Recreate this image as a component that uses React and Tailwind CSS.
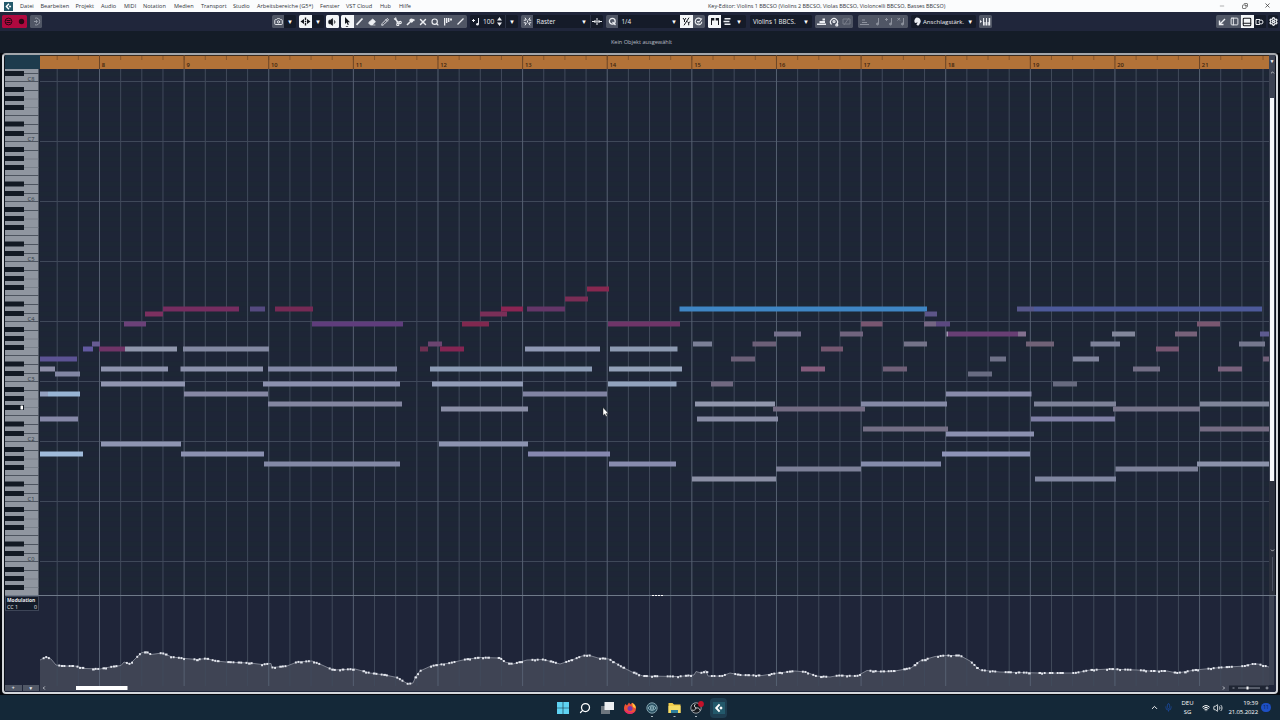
import {
  Camera, ChevronDown, ChevronUp, Copy, Eraser, Mic, Minus, PanelBottom, PanelLeft,
  Pencil, Search, Settings, Volume1, Volume2, Wifi, X,
} from "lucide-react";

const menus = [
  { name: "Datei", w: "w-[20.5px]" },
  { name: "Bearbeiten", w: "w-[35px]" },
  { name: "Projekt", w: "w-[25.5px]" },
  { name: "Audio", w: "w-[23px]" },
  { name: "MIDI", w: "w-[19px]" },
  { name: "Notation", w: "w-[31px]" },
  { name: "Medien", w: "w-[27px]" },
  { name: "Transport", w: "w-[32px]" },
  { name: "Studio", w: "w-[24px]" },
  { name: "Arbeitsbereiche (G5*)", w: "w-[63px]" },
  { name: "Fenster", w: "w-[26px]" },
  { name: "VST Cloud", w: "w-[34px]" },
  { name: "Hub", w: "w-[19px]" },
  { name: "Hilfe", w: "w-[20px]" },
];

const BAR = 84.62;
const bars = Array.from({ length: 14 }, (_, i) => ({ n: i + 8, x: 99.5 + i * BAR }));
const beats = Array.from({ length: 58 }, (_, i) => ({ i, x: 57.2 + i * (BAR / 4) }));
const octaves = [8, 7, 6, 5, 4, 3, 2, 1, 0].map((n, i) => ({ n, y: 81.5 + i * 60 }));

// [start, end, centre y, colour]
const notes = [
  [40, 77, 359, "#5c5394"], [40, 55, 369, "#8d8ea8"], [55, 80, 374, "#8286a4"],
  [40, 48, 394, "#93a0be"], [48, 80, 394, "#98b5d4"], [40, 78, 419, "#8688a8"], [40, 83, 454, "#a0bbda"],
  [83, 93, 349, "#6259a0"], [92, 100, 344, "#675b92"], [99, 125, 349, "#6f3467"],
  [125, 177, 349, "#9097ad"], [183, 269, 349, "#8389a2"],
  [101, 168, 369, "#8e94ae"], [180.5, 263, 369, "#8c92ac"], [101, 185, 384, "#9095b0"],
  [184, 268, 394, "#8688a4"], [101, 181, 444, "#8e95b2"], [181, 264, 454, "#8b91b0"],
  [124, 146, 324, "#6b4178"], [145, 163, 314, "#7c3060"], [163, 239, 309, "#762d60"],
  [250, 265, 309, "#554a80"], [275, 313, 309, "#762a55"], [312, 403, 324, "#5f3d7c"],
  [268, 397, 369, "#8389a6"], [263, 400, 384, "#8b90ae"], [268, 402, 404, "#8386a0"], [264, 400, 464, "#8389a6"],
  [420, 428, 349, "#6e3052"], [428, 442, 344, "#6b4570"], [440, 464, 349, "#852553"],
  [462, 489, 324, "#80284f"], [480, 507, 314, "#7a2f58"], [501, 523, 309, "#8b2553"],
  [527, 565, 309, "#643668"], [565, 588, 299, "#7a2d55"], [587, 609, 289, "#882850"], [608, 680, 324, "#6f3568"],
  [525, 600, 349, "#8f98b4"], [610, 677.5, 349, "#8d9ab2"], [430, 592, 369, "#8c9cb5"], [609, 682, 369, "#93a1b8"],
  [432, 523, 384, "#929cb7"], [608, 676.5, 384, "#92a3bd"], [523, 607, 394, "#8184a3"],
  [441, 528, 409, "#8b8fa7"], [439, 528, 444, "#8c93b0"], [528, 610, 454, "#8688af"], [609, 676, 464, "#888cae"],
  [679.5, 927, 309, "#3f86c4"], [925, 937, 314, "#5d5588"], [924, 936, 324, "#756684"], [936, 950, 324, "#5b4880"],
  [946.5, 948, 334, "#a49ab5"], [948, 1018, 334, "#683f74"], [1018, 1026, 334, "#83718f"],
  [693, 712, 344, "#7b8097"], [711, 733, 384, "#706880"], [731, 755, 359, "#6c6078"], [752.5, 776, 344, "#6c6078"],
  [774, 801, 334, "#74708c"], [801, 825, 369, "#855c7c"], [821, 843, 349, "#755770"], [840, 863, 334, "#70647e"],
  [861, 882.5, 324, "#785670"], [883, 907, 369, "#706078"], [904, 927, 344, "#747389"],
  [695, 775, 404, "#9096ac"], [697, 778, 419, "#888ca5"], [773, 865, 409, "#746c84"],
  [861, 947, 404, "#8489a5"], [863, 948, 429, "#746f85"], [946, 1034, 434, "#8b90b0"],
  [942, 1030, 454, "#8e94b8"], [946, 1031.5, 394, "#888baa"],
  [692, 776, 479, "#8b8fa5"], [776, 861, 469, "#7d8098"], [861, 941, 464, "#858cab"],
  [1017, 1034, 309, "#56578a"], [1034, 1262, 309, "#4d5a9a"], [1026, 1054, 344, "#706277"],
  [968, 992, 374, "#696c82"], [990, 1006, 359, "#6f7188"], [1053, 1077, 384, "#676a7f"],
  [1073, 1099, 359, "#80849c"], [1090.5, 1120, 344, "#7d8299"], [1112, 1135, 334, "#82879b"],
  [1133, 1160, 369, "#736f86"], [1156, 1179, 349, "#785672"], [1175, 1197, 334, "#77627a"],
  [1197, 1220, 324, "#795770"], [1218, 1242, 369, "#7a627d"], [1239, 1265, 344, "#75788e"],
  [1260, 1269, 334, "#5d5b90"], [1263, 1269, 359, "#705f78"],
  [1034, 1116, 404, "#7d8298"], [1031, 1115, 419, "#7f7fa5"], [1113, 1200, 409, "#77758b"],
  [1200, 1269, 404, "#7f8599"], [1200, 1269, 429, "#756c83"],
  [1035, 1116, 479, "#8086a0"], [1115.5, 1198, 469, "#7e829a"], [1197, 1269, 464, "#8b92aa"],
];

const modulation = [
  [40, 660], [46, 657], [51, 659], [56, 665], [62, 666], [75, 666], [85, 668.5], [100, 669], [110, 667],
  [121, 665.5], [124, 662], [130, 664], [136, 658], [141, 653], [146, 651.5], [151, 654.5], [162, 653],
  [172, 657], [185, 658.5], [197, 659.5], [206, 658.5], [216, 661], [226, 662], [250, 663], [262, 664.5],
  [271, 663.5], [272, 667.5], [287, 666], [297, 662], [312, 661], [322, 665], [333, 670], [355, 669],
  [370, 673], [385, 675], [397, 677.5], [408, 684], [413, 683], [416, 676], [420, 671], [431, 666],
  [450, 663], [465, 659.5], [480, 657.5], [500, 658], [505, 662], [513, 664], [527, 660], [543, 659.5],
  [553, 662], [560, 664], [572, 660], [582, 656], [588, 655], [598, 658], [609, 659], [622, 667],
  [632, 672], [643, 676], [678, 676.5], [694, 675], [696, 671.5], [701, 673], [706, 670.5], [708, 676],
  [722, 676], [730, 673], [740, 675], [762, 675.5], [778, 673], [795, 671], [806, 672], [816, 676],
  [830, 677], [838, 675.5], [857, 676], [867, 670.5], [880, 671.5], [895, 671], [911, 668], [920, 661],
  [935, 656.5], [945, 655.5], [960, 655.5], [970, 661], [980, 670], [1000, 672], [1040, 673], [1075, 673],
  [1090, 670], [1110, 669], [1137, 670], [1150, 671], [1167, 671], [1177, 673], [1195, 670], [1220, 667.5],
  [1245, 666], [1252, 664], [1258, 664], [1269, 667],
];

function valueAt(x) {
  const i = modulation.findIndex((p) => p[0] >= x);
  if (i <= 0) return modulation[0][1];
  const [x1, y1] = modulation[i - 1];
  const [x2, y2] = modulation[i];
  return y1 + ((y2 - y1) * (x - x1)) / (x2 - x1);
}

const events = Array.from({ length: 472 }, (_, i) => i)
  .filter((i) => (i * i + 3 * i) % 13 > 2)
  .map((i) => {
    const x = 41 + i * 2.6;
    return { x, w: i % 4 === 0 ? 2.6 : 1.9, y: valueAt(x) + (i % 5 === 0 ? 0.7 : 0) };
  });

function Drop() {
  return <span className="flex w-3 shrink-0 justify-center text-[6px] leading-none text-white">▼</span>;
}

function Cell({ active, dark, children }) {
  return (
    <span
      className={`flex h-full w-full min-w-0 items-center justify-center ${
        active ? "bg-[#f4f6f8] text-[#14171d]" : dark ? "bg-[#151b29] text-[#eceef2]" : "bg-[#505665] text-[#eceef2]"
      }`}
    >
      {children}
    </span>
  );
}

function Group({ className, children }) {
  return (
    <div className={`flex h-[13px] shrink-0 items-center overflow-hidden rounded-[1.5px] bg-[#151b29] ${className}`}>
      {children}
    </div>
  );
}

function CubaseLogo({ size }) {
  return (
    <svg width={size} height={size} viewBox="0 0 12 12" className="shrink-0">
      <rect width="12" height="12" fill="#23596b" />
      <path d="M6.6 2.3 3.2 6l3.4 3.7" fill="none" stroke="#fff" strokeWidth="1.9" />
      <path d="M8 4.3 9.7 6 8 7.7 6.3 6Z" fill="#fff" />
    </svg>
  );
}

function MenuBar() {
  return (
    <header className="flex h-[12px] shrink-0 items-center bg-[#fbfcfd] text-[5.6px] leading-none text-[#30343a]">
      <div className="flex w-5 shrink-0 pl-[3.5px]">
        <CubaseLogo size={9} />
      </div>
      {menus.map((m) => (
        <span key={m.name} className={`${m.w} shrink-0 whitespace-nowrap pt-px`}>{m.name}</span>
      ))}
      <span className="ml-[289px] w-[240px] shrink-0 whitespace-nowrap pt-px text-[5.45px]">
        Key-Editor: Violins 1 BBCSO (Violins 2 BBCSO, Violas BBCSO, Violoncelli BBCSO, Basses BBCSO)
      </span>
      <div className="ml-auto flex w-[61px] shrink-0 items-center gap-[16.5px] pb-px text-[#333]">
        <Minus size={6} strokeWidth={1.5} />
        <Copy size={6} strokeWidth={2.5} className="rotate-90" />
        <X size={7} strokeWidth={2.5} />
      </div>
    </header>
  );
}

function Toolbar() {
  return (
    <div className="flex h-[19px] shrink-0 items-center bg-[#20263b] pl-[2px] text-[6.5px] text-[#eceef2]">
      <Group className="w-[25px]">
        <span className="flex h-full w-full items-center justify-around bg-[#b0093f] text-[#2b0615]">
          <svg width="9" height="9" viewBox="0 0 9 9" fill="none" stroke="currentColor">
            <circle cx="4.5" cy="4.5" r="3.4" />
            <path d="M2.5 3.5h4M2.5 5.5h4" />
          </svg>
          <svg width="7" height="7" viewBox="0 0 7 7" fill="currentColor"><circle cx="3.5" cy="3.5" r="2.7" /></svg>
        </span>
      </Group>
      <Group className="ml-[3px] w-[12px]">
        <Cell>
          <svg width="9" height="9" viewBox="0 0 9 9" fill="none" stroke="#9398a4">
            <path d="M3 1.2a3.5 3.5 0 1 1 0 6.6M2 4.5h3M4 3l1.500 1.500L4 6" />
          </svg>
        </Cell>
      </Group>
      <Group className="ml-[230px] w-[24px]">
        <Cell><Camera size={9} strokeWidth={2.5} /></Cell>
        <Drop />
      </Group>
      <Group className="ml-[3px] w-[25px]">
        <Cell active>
          <svg width="11" height="9" viewBox="0 0 11 9" fill="currentColor">
            <path d="M.5 4.500 4 2v5ZM10.500 4.500 7 2v5ZM4.800.500h1.400v2.500H4.800zM4.800 3.800h1.400v1.400H4.800zM4.800 6h1.400v2.500H4.800z" />
          </svg>
        </Cell>
        <Drop />
      </Group>
      <Group className="ml-[2px] w-[13px]">
        <Cell active><Volume1 size={10} fill="currentColor" /></Cell>
      </Group>
      <Group className="ml-[2px] w-[126px]">
        <Cell active>
          <svg width="8" height="11" viewBox="0 0 8 11" fill="currentColor"><path d="M2 1v7l1.600-1.400L4.700 9l1.200-.6-1.100-2.200H7ZM2.500 10h3l-1.500 1z" /></svg>
        </Cell>
        <Cell>
          <svg width="9" height="9" viewBox="0 0 9 9" stroke="currentColor" strokeWidth="1.7"><path d="m1.500 7.800 6-6.300" /></svg>
        </Cell>
        <Cell><Eraser size={8} fill="currentColor" /></Cell>
        <Cell><Pencil size={8} strokeWidth={2.8} /></Cell>
        <Cell>
          <svg width="9" height="9" viewBox="0 0 9 9" fill="none" stroke="currentColor" strokeWidth="1.1">
            <path d="m1 1.500 5 4M2.500.500l2 6" /><circle cx="7.2" cy="5.5" r="1.1" /><circle cx="4.8" cy="7.5" r="1.1" />
          </svg>
        </Cell>
        <Cell>
          <svg width="9" height="9" viewBox="0 0 9 9" fill="none" stroke="currentColor" strokeWidth="1.6">
            <path d="M1 8 4 5" /><circle cx="5.4" cy="3.6" r="1.3" fill="currentColor" /><path d="M6.500 2.500 8.500 3.500" />
          </svg>
        </Cell>
        <Cell><X size={10} strokeWidth={3.4} /></Cell>
        <Cell><Search size={8} strokeWidth={3.4} /></Cell>
        <Cell>
          <svg width="10" height="9" viewBox="0 0 10 9" fill="currentColor"><path d="M1 1h1.300v7.500H1zM3 1h1.400v5H3zM5 1h1.400v4H5zM7 1.500h2V3.500H7z" /></svg>
        </Cell>
        <Cell>
          <svg width="9" height="9" viewBox="0 0 9 9" stroke="currentColor" strokeWidth="1.3"><path d="m1.500 7.500 6-6" /></svg>
        </Cell>
      </Group>
      <Group className="ml-[3px] w-[48px]">
        <svg width="8" height="8" viewBox="0 0 8 8" className="ml-[2px] shrink-0" fill="currentColor"><path d="M0 2h3v1H0zM1 1h1v3H1zM6 0h1v6H6z" /><circle cx="5.5" cy="6.2" r="1.3" /></svg>
        <span className="ml-[3px] w-[14px] text-[6.6px]">100</span>
        <svg width="5" height="9" viewBox="0 0 5 9" fill="currentColor" className="ml-px shrink-0"><path d="M0 3.500 2.500 0 5 3.500ZM0 5.500h5L2.500 9Z" /></svg>
        <span className="ml-[3.5px] flex h-full items-center border-l border-[#2c3345]"><Drop /></span>
      </Group>
      <Group className="ml-[3px] w-[82px]">
        <span className="h-full w-[12px] shrink-0">
          <Cell>
            <svg width="9" height="9" viewBox="0 0 9 9" fill="none" stroke="currentColor">
              <path d="M2 .7 3.300 3 .8 3.300M2 8.300 3.300 6 .8 5.700M7 .7 5.700 3l2.500.300M7 8.300 5.700 6l2.500-.3M4.500 3.500v2" />
            </svg>
          </Cell>
        </span>
        <span className="ml-[3.5px] flex-1 text-[6.3px]">Raster</span>
        <Drop />
        <span className="flex h-full w-[13px] items-center justify-center border-l border-[#2c3345]">
          <svg width="10" height="7" viewBox="0 0 10 7" stroke="currentColor"><path d="M5 0v7M0 3.500h3.500M6.500 3.500H10M2.500 2l1.500 1.500L2.500 5M7.500 2 6 3.500 7.500 5" fill="none" /></svg>
        </span>
      </Group>
      <Group className="ml-[3px] w-[99px]">
        <span className="h-full w-[12px] shrink-0">
          <Cell>
            <svg width="9" height="9" viewBox="0 0 9 9" fill="none" stroke="currentColor" strokeWidth="1.3"><circle cx="4.3" cy="4.2" r="2.9" /><path d="m4.500 5 3 3" /></svg>
          </Cell>
        </span>
        <span className="ml-[3.5px] flex-1 text-[6.3px]">1/4</span>
        <Drop />
        <span className="flex h-full w-[25px]">
          <Cell active>
            <svg width="9" height="9" viewBox="0 0 9 9" fill="none" stroke="currentColor"><path d="m2 8.300 5-7.600M1 1l1.500 2L4 1M2.500 3v2M5.500 4.500 6.700 6 8 4.500M6.700 6v2.300" /></svg>
          </Cell>
          <Cell>
            <svg width="9" height="9" viewBox="0 0 9 9" fill="none" stroke="currentColor" strokeWidth="1.1"><path d="M7.800 4.700a3.300 3.300 0 1 1-.8-2.400M3 4.500h2.500L8 1.500M3.500 6h2" /></svg>
          </Cell>
        </span>
      </Group>
      <Group className="ml-[3px] w-[38px]">
        <span className="h-full w-[13px] shrink-0">
          <Cell active>
            <svg width="10" height="9" viewBox="0 0 10 9" fill="currentColor"><path d="M1 1h3.300v2.500H2V8H1zM5.700 1H9v7H8V3.500H5.700z" /></svg>
          </Cell>
        </span>
        <span className="flex w-[12px] shrink-0 justify-center">
          <svg width="8" height="9" viewBox="0 0 8 9" fill="currentColor"><path d="M1.500 1h6v1.600h-6zM.5 3.700h6v1.600h-6zM1.500 6.400h6V8h-6z" /></svg>
        </span>
        <Drop />
      </Group>
      <Group className="ml-[4px] w-[62px]">
        <span className="ml-[3px] flex-1 whitespace-nowrap text-[6.2px]">Violins 1 BBCS.</span>
        <Drop />
      </Group>
      <Group className="ml-[3px] w-[38px]">
        <Cell>
          <svg width="9" height="9" viewBox="0 0 9 9" fill="currentColor"><path d="M0 6.500h9V8H0zM2.500 4H8v2H2.500zM5.500 1.500H8V3.500H5.500z" /></svg>
        </Cell>
        <Cell>
          <svg width="10" height="10" viewBox="0 0 10 10" fill="none" stroke="currentColor" strokeWidth="1.2"><path d="M2.500 7.500a3.500 3.500 0 1 1 5 0" /><circle cx="5" cy="4.5" r="1" /><circle cx="7.8" cy="8" r="1" /></svg>
        </Cell>
        <Cell>
          <svg width="9" height="9" viewBox="0 0 9 9" fill="none" stroke="#777c89"><path d="M1 2h7v5H1zM2 8l5-7" /></svg>
        </Cell>
      </Group>
      <Group className="ml-[5px] w-[50px]">
        <Cell>
          <svg width="9" height="9" viewBox="0 0 9 9" stroke="#8d929e"><path d="M0 7.500h9M2 5.500h5M2 3h3" /></svg>
        </Cell>
        {["", "M0 2.5h3M1.5 1v3", "M.5 1l2.5 2.5M3 1 .5 3.5"].map((d) => (
          <Cell key={d}>
            <svg width="9" height="9" viewBox="0 0 9 9" fill="none" stroke="#8d929e">
              <path d={`${d}M6.5 1v6`} />
              <circle cx="5.5" cy="7" r="1" fill="#8d929e" />
            </svg>
          </Cell>
        ))}
      </Group>
      <Group className="ml-[3px] w-[65px]">
        <svg width="9" height="9" viewBox="0 0 9 9" className="ml-[1px] shrink-0" fill="currentColor"><path d="M4.500.500a4 3.600 0 0 1 1.500 7l-.5-2-2.500.500A3.800 3.800 0 0 1 4.500.500Z" /><circle cx="6" cy="7.2" r="1.3" /></svg>
        <span className="ml-[2px] flex-1 whitespace-nowrap text-[6.1px]">Anschlagstärk.</span>
        <Drop />
      </Group>
      <Group className="ml-[3px] w-[13px]">
        <Cell>
          <svg width="11" height="9" viewBox="0 0 11 9" fill="currentColor"><path d="M0 3 2 4.500 0 6zM3 1h1.700v7.500H3zM5.500 1h1.900v7.500H5.500zM8.200 1h2v7.500h-2z" /><path d="M4.200 1H6v4H4.200zM7 1h1.700v4H7z" fill="#505665" /></svg>
        </Cell>
      </Group>
      <Group className="ml-auto w-[50px]">
        <Cell>
          <svg width="8" height="8" viewBox="0 0 8 8" fill="none" stroke="currentColor" strokeWidth="1.4"><path d="M7 1 2 6M1.500 2.500v4h4" /></svg>
        </Cell>
        <Cell><PanelLeft size={9} strokeWidth={2.5} /></Cell>
        <Cell active><PanelBottom size={10} strokeWidth={2.5} /></Cell>
        <Cell dark>
          <svg width="9" height="8" viewBox="0 0 9 8" fill="none" stroke="currentColor"><path d="M5 6.500H1v-5h4" /><circle cx="6" cy="4" r="2" /></svg>
        </Cell>
      </Group>
      <Group className="ml-[2px] mr-[2px] w-[10px]">
        <Cell dark><Settings size={9} strokeWidth={3.5} /></Cell>
      </Group>
    </div>
  );
}

function Ruler() {
  return (
    <div className="flex h-[14px] shrink-0">
      <div className="w-[35px] shrink-0 bg-[#1d3b4d]" />
      <svg width="1229" height="14" viewBox="40 55 1229 14" className="shrink-0">
        <rect x="40" y="55" width="1229" height="14" fill="#b27238" />
        <path d="M40 55.500h1229" stroke="#3a2a1d" />
        {beats.map((b) => (
          <path key={b.i} d={`M${b.x} 56v4`} stroke="#7c4f29" strokeWidth=".8" />
        ))}
        {bars.map((b) => (
          <g key={b.n}>
            <path d={`M${b.x} 55v14`} stroke="#6b4526" />
            <text x={b.x + 2.3} y="66.600" fontSize="5.8" fontWeight="600" fill="#3c230f">{b.n}</text>
          </g>
        ))}
      </svg>
      <div className="flex w-[6px] items-center justify-center bg-[#3d4353] text-[5px] text-white">▼</div>
    </div>
  );
}

function Keyboard() {
  return (
    <svg width="35" height="526" viewBox="5 69 35 526" className="shrink-0">
      <rect x="5" y="69" width="35" height="526" fill="#1b2230" />
      <rect x="5" y="69" width="33.5" height="526" fill="#9096a0" />
      {[21.5, ...octaves.map((o) => o.y)].map((y) => (
        <g key={y}>
          {[0, 9, 17.5, 26, 34, 43, 52].map((d) => (
            <path key={d} d={`M5 ${y + d}h33.5`} stroke={d === 17.5 || d === 26 ? "#767c87" : "#3c434e"} strokeWidth=".8" />
          ))}
          {[8, 17, 26, 42.5, 52].map((d) => (
            <rect key={d} x="5" y={y + d - 2.5} width="19" height="5" fill="#131a24" />
          ))}
        </g>
      ))}
      {octaves.map((o) => (
        <text key={o.n} x="27.5" y={o.y - 0.8} fontSize="5.8" fill="#2f3641">C{o.n}</text>
      ))}
      <rect x="20.5" y="405.5" width="2.5" height="4" rx=".6" fill="#fff" />
    </svg>
  );
}

function GridLines({ top, bottom }) {
  return beats.map((b) => (
    <path
      key={b.i}
      d={`M${b.x} ${top}V${bottom}`}
      stroke={b.i % 4 === 2 ? "#566072" : "#414a5b"}
      strokeWidth="1"
    />
  ));
}

function NoteCanvas() {
  return (
    <svg width="1229" height="526" viewBox="40 69 1229 526" className="shrink-0">
      <rect x="40" y="69" width="1229" height="526" fill="#1e2537" />
      {[21.5, ...octaves.map((o) => o.y)].map((y) =>
        [5, 15, 25, 40, 50].map((d) => (
          <rect key={`${y}-${d}`} x="40" y={y + d} width="1229" height="5" fill="#1d2735" />
        ))
      )}
      {octaves.map((o) => (
        <path key={o.n} d={`M40 ${o.y}h1229`} stroke="#3f4859" strokeWidth="1" />
      ))}
      <GridLines top={69} bottom={595} />
      {notes.map(([x1, x2, y, fill]) => (
        <rect key={`${x1}-${y}`} x={x1} y={y - 2.5} width={x2 - x1} height="5" fill={fill} />
      ))}
      <path d="M603 407.500v8l1.800-1.600 1.200 2.600 1.300-.6-1.200-2.500h2.300Z" fill="#fff" stroke="#111" strokeWidth=".4" />
    </svg>
  );
}

function Divider() {
  return (
    <div className="flex h-px shrink-0 bg-[#6f7a89] pl-[647px]">
      {[0, 1, 2, 3].map((i) => (
        <span key={i} className="mr-px h-px w-[2px] shrink-0 bg-white" />
      ))}
    </div>
  );
}

function ControllerLane() {
  const line = modulation.map((p) => p.join(" ")).join("L");
  return (
    <div className="flex h-[96px] shrink-0 bg-[#1f2539]">
      <div className="flex w-[35px] shrink-0 flex-col justify-between text-[5.3px] leading-[7px] text-[#e8eaee]">
        <div className="h-[15px] w-[34px] border border-[#3d4557] bg-[#141b29] px-[1px]">
          <div className="whitespace-nowrap text-[4.9px] font-bold leading-[6.5px]">Modulation</div>
          <div className="flex justify-between leading-[6px]"><span>CC 1</span><span>0</span></div>
        </div>
        <div className="mb-[1px] flex h-[6px] w-[34px] gap-px text-[5px] leading-[6px]">
          <span className="flex-1 bg-[#505766] text-center font-bold">+</span>
          <span className="flex-1 bg-[#505766] text-center">▼</span>
        </div>
      </div>
      <svg width="1229" height="96" viewBox="40 596 1229 96" className="shrink-0">
        <rect x="40" y="596" width="1229" height="96" fill="#1f2539" />
        <path d={`M40 691V660L${line}V691Z`} fill="#3f4454" />
        <GridLines top={596} bottom={686} />
        <path d={`M${line}`} fill="none" stroke="#9095a2" strokeWidth=".8" />
        {events.map((e) => (
          <rect key={e.x} x={e.x - 0.9} y={e.y - 1} width={e.w} height="2" fill="#e4e7ee" />
        ))}
        <rect x="76" y="686" width="51.5" height="4" fill="#fff" />
        <g fill="none" stroke="#e2e5ea" strokeWidth=".8">
          <path d="m44.800 686.500-1.500 1.500 1.500 1.500M1223 686.500l1.500 1.500-1.500 1.500" />
        </g>
        <rect x="1229" y="685.5" width="40" height="5.5" fill="#1f2533" />
        <path d="M1232.500 688h2M1238 688h22M1265.500 688h3M1267 686.500v3" stroke="#aeb3bf" strokeWidth=".8" />
        <rect x="1246.5" y="686.5" width="2" height="3" fill="#fff" />
      </svg>
      <div className="h-[89px] w-[5px] bg-[#3c4252]" />
    </div>
  );
}

function Taskbar() {
  return (
    <footer className="flex h-[25px] shrink-0 items-center bg-[#142838] text-white">
      <div className="ml-[548px] flex items-center">
        <span className="flex w-[28px] justify-center pl-[1px]">
          <svg width="12" height="12" viewBox="0 0 12 12" fill="#5fd3f3"><path d="M0 0h5.700v5.700H0zM6.300 0H12v5.700H6.300zM0 6.300h5.700V12H0zM6.300 6.300H12V12H6.300z" /></svg>
        </span>
        <span className="flex w-[18px] justify-center"><Search size={12} strokeWidth={2.5} className="-scale-x-100" /></span>
        <span className="flex w-[27px] justify-center">
          <svg width="13" height="12" viewBox="0 0 13 12"><path d="M0 4h9v8H0z" fill="#6d767e" /><path d="M3.500 0H13v8H3.500z" fill="#eceff1" /></svg>
        </span>
        <span className="flex w-[17px] justify-center">
          <svg width="12" height="12" viewBox="0 0 12 12">
            <path d="M1.500 2 3 3.500 5 .5l1.500 2L8 .8c3 1.500 4 3.600 4 5.600a6 5.600 0 0 1-12 0C0 4.500.8 3 1.500 2Z" fill="#ef5134" />
            <path d="M8 .8c3 1.500 4 3.600 3.600 5.700L9 5Z" fill="#ffc33c" />
            <circle cx="6" cy="6.5" r="2.5" fill="#7a38a8" />
            <path d="M.3 7A6 5.600 0 0 0 6 12c2 0 4-1 5-2.500-3 1.500-8 1-10.700-2.500Z" fill="#e52969" />
          </svg>
        </span>
        <span className="flex w-[28px] justify-center">
          <svg width="12" height="18" viewBox="0 -3 12 18"><circle cx="6" cy="6" r="5.2" fill="#2c5365" stroke="#7e9da9" /><path d="M2 6c2-3 6-3 8 0-2 3-6 3-8 0ZM4.500 4.500v3M6 3.500v5M7.500 4.500v3" fill="none" stroke="#9fc3cc" strokeWidth=".8" /><path d="M5 14.500h2" stroke="#aab7bf" /></svg>
        </span>
        <span className="flex w-[16px] justify-center">
          <svg width="13" height="18" viewBox="0 -3 13 18"><path d="M.5 1h4l1.500 1.500h6.500V11H.5z" fill="#f3cd4b" /><path d="M.5 4h12v7H.5z" fill="#f7dd66" /><path d="M3 8h7v3H3z" fill="#2f7f9c" /><path d="M5.500 14.500h2" stroke="#aab7bf" /></svg>
        </span>
        <span className="flex w-[28px] justify-center pl-[2px]">
          <svg width="14" height="18" viewBox="0 -3 14 18">
            <circle cx="6" cy="6" r="5.2" fill="#15191e" stroke="#a6abb1" strokeWidth=".9" />
            <path d="M6 6C4 5 4 3 5.500 2M6 6c2-.5 4 .5 4 2.500M6 6c-.5 2-2.500 3-4 2" fill="none" stroke="#c9cdd1" />
            <circle cx="11" cy="2" r="2.9" fill="#c4122a" /><path d="M5 14.500h2" stroke="#aab7bf" />
          </svg>
        </span>
        <span className="flex h-[20px] w-[17px] items-center justify-center rounded-sm bg-[#1e3d50]"><CubaseLogo size={12} /></span>
      </div>
      <div className="ml-auto flex items-center text-[6px] leading-[8.5px]">
        <ChevronUp size={9} strokeWidth={2.5} />
        <Mic size={9} className="ml-[5px] text-[#1c4ba0]" />
        <div className="ml-[6px] w-[17px] text-center">DEU<br />SG</div>
        <Wifi size={8} strokeWidth={3} className="ml-[6px]" />
        <Volume2 size={10} className="ml-[3px]" />
        <div className="ml-[5px] w-[30px] whitespace-nowrap text-right tracking-[-0.1px]">19:39<br />21.05.2022</div>
        <span className="ml-[3px] mr-[9px] flex h-[9px] w-[10px] items-center justify-center rounded-full bg-[#1d4fc4] text-[5px] text-[#0b1d45]">11</span>
      </div>
    </footer>
  );
}

export default function App() {
  return (
    <div className="flex h-[720px] w-[1280px] flex-col overflow-hidden bg-[#05080e] font-['Open_Sans','Noto_Sans',sans-serif]">
      <MenuBar />
      <Toolbar />
      <div className="flex h-[22px] shrink-0 items-center justify-center bg-[#141c27] pl-[3px] text-[5.6px] text-[#b9bec6]">
        Kein Objekt ausgewählt
      </div>
      <main className="mx-[2px] mb-[1px] flex h-[641px] shrink-0 flex-col overflow-hidden rounded-[4px] border-2 border-[#d3d6da] border-t-[#a3a6ab] bg-[#0b101a] pl-px">
        <Ruler />
        <div className="flex h-[526px] shrink-0">
          <Keyboard />
          <NoteCanvas />
          <div className="flex w-[6px] flex-col items-center bg-[#3b4151] text-white">
            <ChevronUp size={5} strokeWidth={3} className="mt-[1px] shrink-0" />
            <div className="mt-[23px] h-[383px] w-[4px] shrink-0 bg-[#f6f8fb]" />
            <div className="flex w-full flex-1 flex-col items-center bg-[#2b303d]">
              <ChevronDown size={5} strokeWidth={3} className="mt-[67px]" />
              <span className="mt-[4px] h-[34px] w-px bg-[#4c5261]" />
            </div>
          </div>
        </div>
        <Divider />
        <ControllerLane />
      </main>
      <Taskbar />
    </div>
  );
}
